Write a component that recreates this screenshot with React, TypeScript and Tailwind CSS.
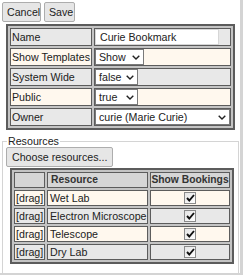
import React from "react";

const rowBg = (i: number) => (i % 2 === 0 ? "bg-[#e8e8e8]" : "bg-[#fff8ee]");

function Btn({ children, className = "" }: { children: React.ReactNode; className?: string }) {
  return (
    <button
      className={
        "h-[20px] px-[4px] bg-[#e6e6e6] border border-[#adadad] rounded-[2px] text-[#222] leading-none whitespace-nowrap " +
        className
      }
    >
      {children}
    </button>
  );
}

function Chevron() {
  return (
    <svg width="8" height="5" viewBox="0 0 8 5" className="shrink-0">
      <path d="M0.7 0.7 L4 4 L7.3 0.7" fill="none" stroke="#222" strokeWidth="1.4" />
    </svg>
  );
}

function Select({ value, w }: { value: string; w: string }) {
  return (
    <div
      className={
        "h-[16px] flex items-center justify-between pl-[3px] pr-[3px] bg-white border border-[#7a7a7a] " + w
      }
    >
      <span>{value}</span>
      <Chevron />
    </div>
  );
}

function Check() {
  return (
    <div className="mx-auto w-[12px] h-[12px] border border-[#8a8a8a] bg-gradient-to-br from-[#e4e4e4] to-white flex items-center justify-center">
      <svg width="9" height="8" viewBox="0 0 9 8">
        <path d="M1 4 L3.3 6.5 L8 1" fill="none" stroke="#111" strokeWidth="1.9" />
      </svg>
    </div>
  );
}

const cell = "border border-[#5c5c5c] p-0 whitespace-nowrap";

export default function App() {
  const props: { label: string; content: React.ReactNode }[] = [
    {
      label: "Name",
      content: (
        <div className="h-[16px] w-[124px] bg-white border border-[#d6d6d6] flex items-center pl-[4px]">
          Curie Bookmark
        </div>
      ),
    },
    { label: "Show Templates", content: <Select value="Show" w="w-[49px]" /> },
    { label: "System Wide", content: <Select value="false" w="w-[43px]" /> },
    { label: "Public", content: <Select value="true" w="w-[43px]" /> },
    { label: "Owner", content: <Select value="curie (Marie Curie)" w="w-full" /> },
  ];
  const resources = ["Wet Lab", "Electron Microscope", "Telescope", "Dry Lab"];

  return (
    <div className="w-[247px] h-[277px] overflow-hidden bg-white font-['Liberation_Sans',Arial,sans-serif] text-[10.67px] text-[#222]">
      <div className="w-[243px] h-[275px] border-r-[3px] border-b-2 border-[#d4d4d4] pt-[2px] pl-[2px]">
        <div className="flex gap-[3px]">
          <Btn className="w-[39px]">Cancel</Btn>
          <Btn className="w-[31px]">Save</Btn>
        </div>
        <table className="ml-[4px] mt-[2px] border-separate border-spacing-[2px] border-2 border-[#5c5c5c] bg-[#c4c4c4]">
          <tbody>
            {props.map((p, i) => (
              <tr key={p.label}>
                <td className={cell + " w-[82px] h-[18px] pl-[1px] leading-[16px] " + rowBg(i)}>{p.label}</td>
                <td className={cell + " w-[137px] h-[18px] align-top " + rowBg(i)}>{p.content}</td>
              </tr>
            ))}
          </tbody>
        </table>
        <fieldset className="mt-[5px] border border-[#d4d4d4] pl-[3px] pr-[3px] pb-[10px] w-[237px]">
          <legend className="ml-[1px] px-[1px] leading-[12px]">Resources</legend>
          <Btn className="px-[5px]">Choose resources...</Btn>
          <table className="ml-[4px] mt-[1px] border-separate border-spacing-[2px] border-2 border-[#5c5c5c] bg-[#c4c4c4]">
            <thead>
              <tr>
                <th className={cell + " w-[31px] h-[16px] leading-[14px] bg-[#d6d6d6]"}></th>
                <th className={cell + " w-[101px] h-[16px] leading-[14px] bg-[#d6d6d6] text-left pl-[3px] font-bold text-[10.3px] text-[#333]"}>
                  Resource
                </th>
                <th className={cell + " w-[80px] h-[16px] leading-[14px] bg-[#d6d6d6] font-bold text-[10.3px] text-[#333]"}>
                  Show Bookings
                </th>
              </tr>
            </thead>
            <tbody>
              {resources.map((r, i) => (
                <tr key={r}>
                  <td className={cell + " h-[16px] leading-[14px] pl-[1px] " + rowBg(i + 1)}>[drag]</td>
                  <td className={cell + " h-[16px] leading-[14px] pl-[2px] " + rowBg(i + 1)}>{r}</td>
                  <td className={cell + " h-[16px] leading-[14px] " + rowBg(i + 1)}>
                    <Check />
                  </td>
                </tr>
              ))}
            </tbody>
          </table>
        </fieldset>
      </div>
    </div>
  );
}
